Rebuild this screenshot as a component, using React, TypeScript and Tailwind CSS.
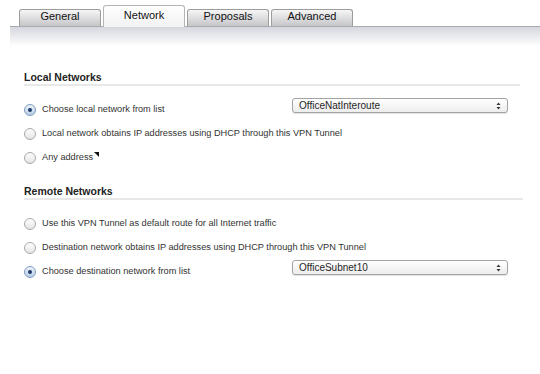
import React from 'react';

const tabs = ['General', 'Network', 'Proposals', 'Advanced'];

const Radio: React.FC<{ checked?: boolean }> = ({ checked }) => (
  <span
    className={
      checked
        ? 'flex h-[12px] w-[12px] shrink-0 items-center justify-center rounded-full border border-[#7d9cc0] bg-gradient-to-b from-[#eef4fb] to-[#b9cde6]'
        : 'flex h-[12px] w-[12px] shrink-0 items-center justify-center rounded-full border border-[#a9a9a9] bg-gradient-to-b from-white to-[#e4e4e4]'
    }
  >
    {checked && <span className="h-[4px] w-[4px] rounded-full bg-[#1e3a66]" />}
  </span>
);

const Select: React.FC<{ value: string }> = ({ value }) => (
  <div className="ml-auto -mt-[9px] mr-[12px] flex h-[15px] w-[216px] items-center justify-between rounded-[3px] border border-[#a3a3a3] bg-gradient-to-b from-white to-[#ededed] pl-[6px] pr-[6px] text-[10px] leading-none text-[#1f1f1f] shadow-[0_1px_1px_rgba(0,0,0,0.12)]">
    <span>{value}</span>
    <svg width="5" height="8" viewBox="0 0 5 8">
      <path d="M2.5 0.5 L4.5 3 L0.5 3 Z" fill="#333" />
      <path d="M2.5 7.5 L4.5 5 L0.5 5 Z" fill="#333" />
    </svg>
  </div>
);

const Row: React.FC<{ checked?: boolean; label: string; select?: string; mark?: boolean }> = ({
  checked,
  label,
  select,
  mark,
}) => (
  <div className="flex h-[24px] items-center">
    <Radio checked={checked} />
    <span className="ml-[6px] text-[9.2px] text-[#333]">{label}</span>
    {mark && (
      <svg width="5" height="5" viewBox="0 0 5 5" className="mb-[7px] ml-[1px]">
        <path d="M0 0 L5 0 L5 5 Z" fill="#111" />
      </svg>
    )}
    {select && <Select value={select} />}
  </div>
);

const Header: React.FC<{ title: string; className?: string }> = ({ title, className }) => (
  <div
    className={`border-b-2 border-[#e8e8e8] text-[10.5px] font-bold leading-[13px] text-[#222] ${className ?? ''}`}
  >
    {title}
  </div>
);

export default function App() {
  return (
    <div className="relative h-[374px] w-[540px] overflow-hidden bg-white font-['Liberation_Sans',Arial,sans-serif]">
      {/* tab strip */}
      <div className="flex h-[26px] items-end gap-[2px] pl-[19px]">
        {tabs.map((t) =>
          t === 'Network' ? (
            <div
              key={t}
              className="relative z-10 -mb-px h-[22px] w-[82px] rounded-t-[3px] border border-b-0 border-[#b4b4b4] bg-gradient-to-b from-white to-[#f2f2f4] pt-[3px] text-center text-[11px] leading-[12px] text-[#111]"
            >
              {t}
            </div>
          ) : (
            <div
              key={t}
              className="h-[17px] w-[82px] rounded-t-[3px] border border-b-0 border-[#9c9c9c] bg-gradient-to-b from-[#f6f6f6] to-[#c6c6c9] text-center text-[11px] leading-[12px] text-[#111]"
            >
              {t}
            </div>
          )
        )}
      </div>
      <div className="ml-[10px] h-[20px] border-t border-[#a9a9b0] bg-gradient-to-b from-[#d6d7de] to-white" />

      <div className="pl-[24px] pr-[20px]">
        <Header title="Local Networks" className="mt-[25px]" />
        <div className="mt-[12px]">
          <Row checked label="Choose local network from list" select="OfficeNatInteroute" />
          <Row label="Local network obtains IP addresses using DHCP through this VPN Tunnel" />
          <Row label="Any address" mark />
        </div>

        <Header title="Remote Networks" className="mt-[15px] mr-[-3px]" />
        <div className="mt-[12px]">
          <Row label="Use this VPN Tunnel as default route for all Internet traffic" />
          <Row label="Destination network obtains IP addresses using DHCP through this VPN Tunnel" />
          <Row checked label="Choose destination network from list" select="OfficeSubnet10" />
        </div>
      </div>
    </div>
  );
}
